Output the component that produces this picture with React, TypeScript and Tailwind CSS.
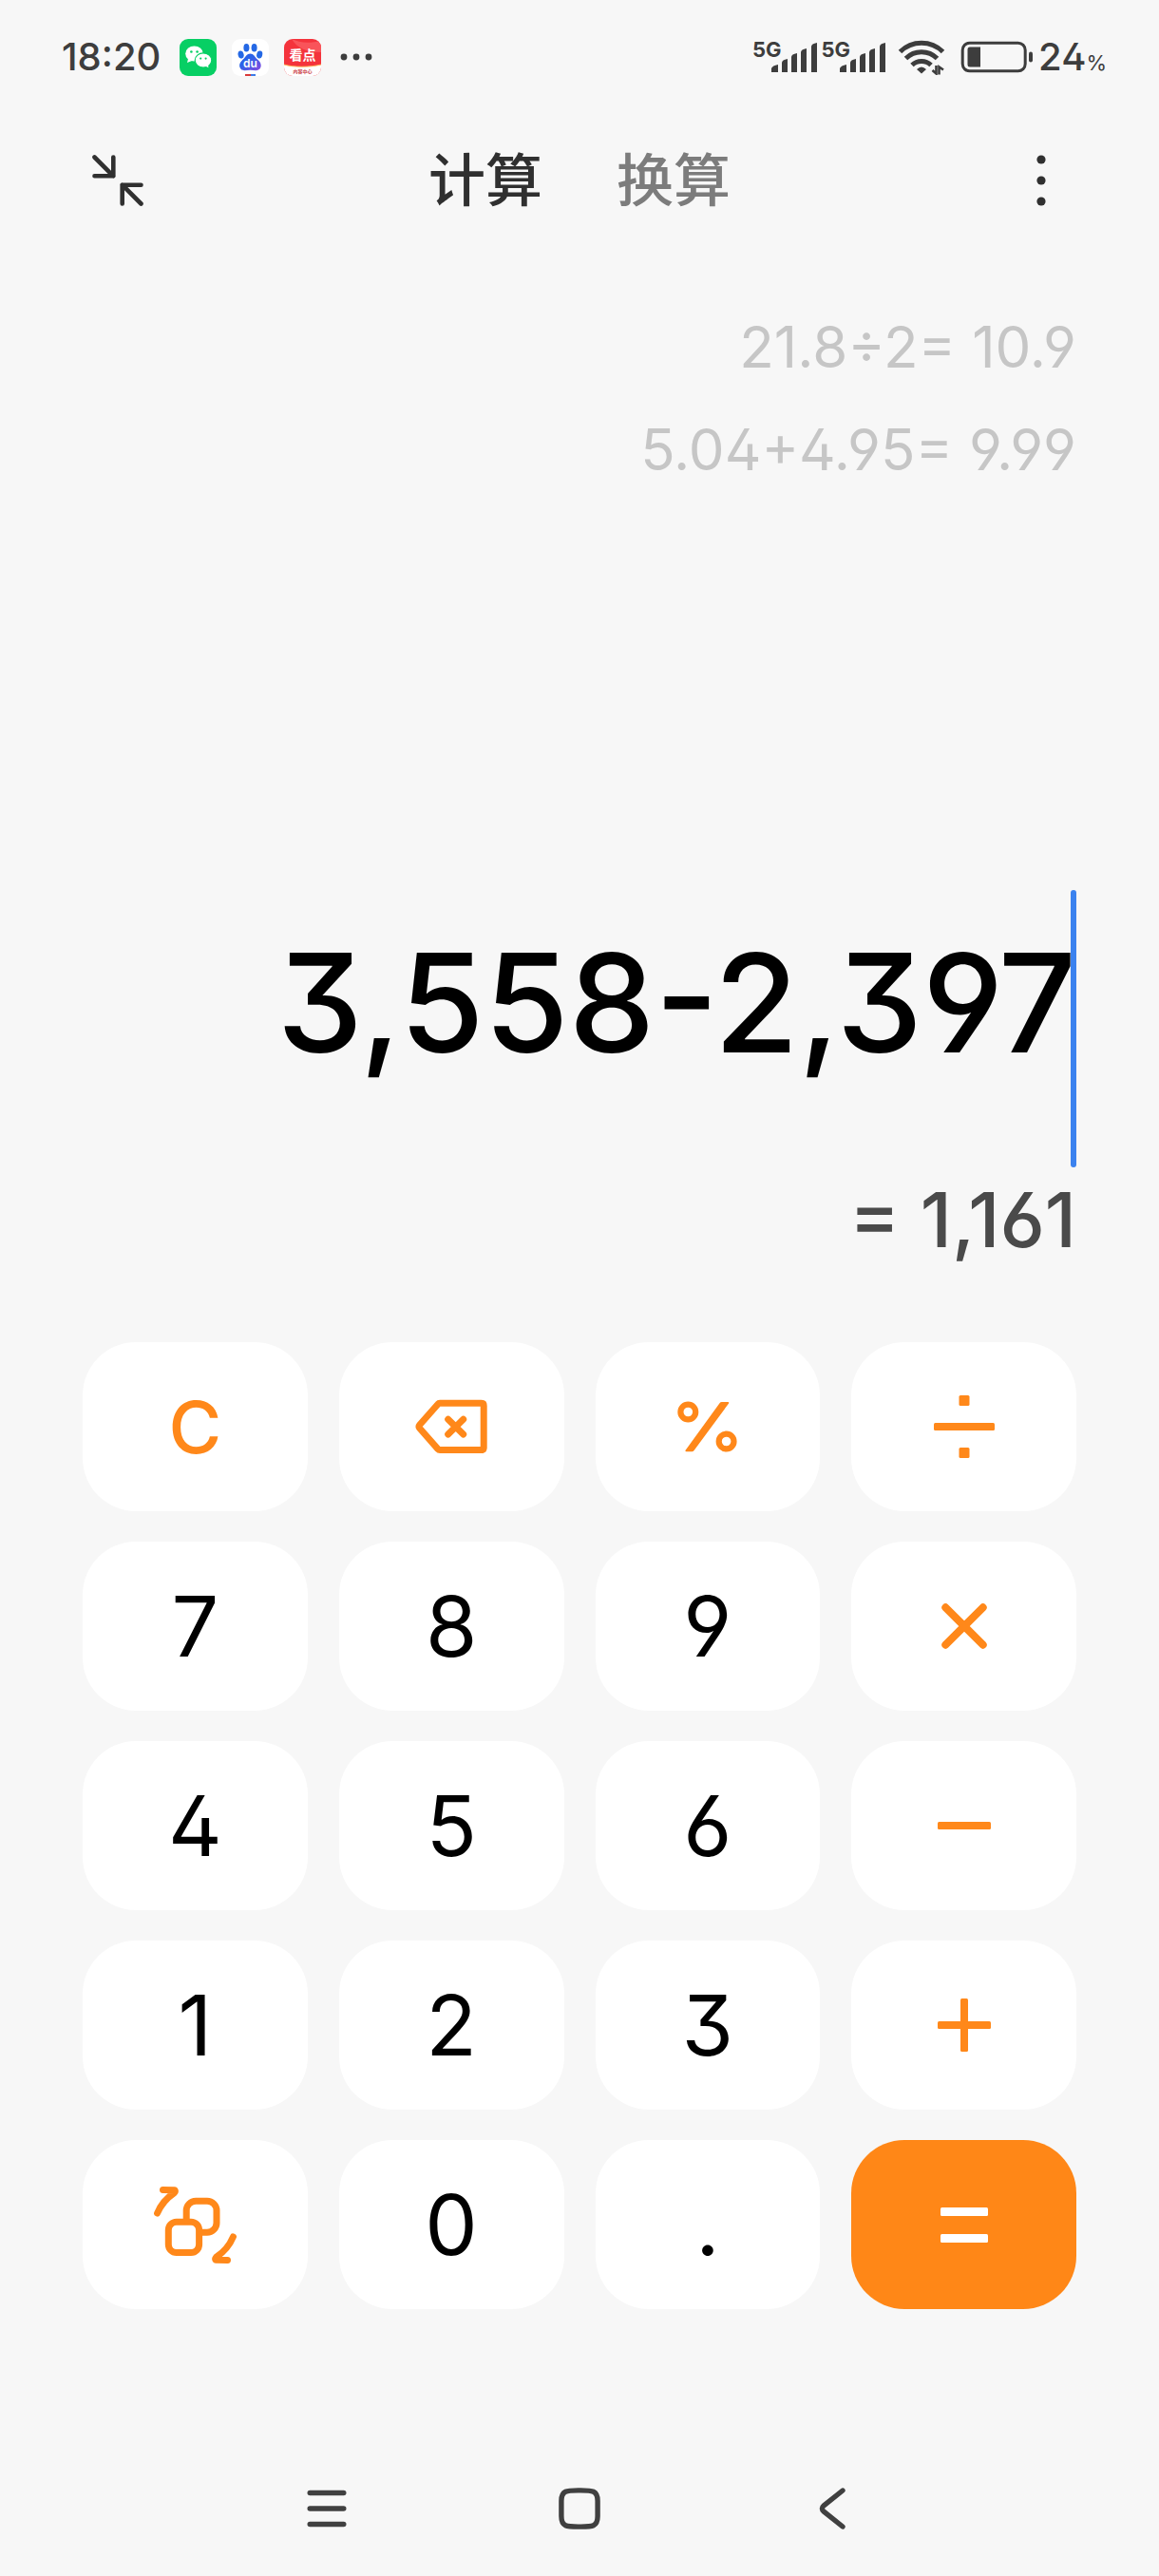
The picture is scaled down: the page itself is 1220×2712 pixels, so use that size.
import type { ReactNode } from "react";

const HISTORY = ["21.8÷2= 10.9", "5.04+4.95= 9.99"];

function WeChatIcon() {
  return (
    <svg viewBox="0 0 39 39" className="size-[39px]" aria-label="微信">
      <rect width="39" height="39" rx="9" fill="#07cf64" />
      <g fill="#fff">
        <ellipse cx="15.5" cy="15.5" rx="9.3" ry="8" />
        <path d="M9 21l-1 4 5-2z" />
        <ellipse cx="25" cy="22.5" rx="8.8" ry="7.6" stroke="#07cf64" strokeWidth="1.2" />
        <path d="M27 28.5l3.5 1.8-.6-3.3z" />
      </g>
      <g fill="#07cf64">
        <circle cx="12.4" cy="13.5" r="1.3" />
        <circle cx="18.6" cy="13.5" r="1.3" />
        <circle cx="22.2" cy="20.6" r="1.1" />
        <circle cx="27.6" cy="20.6" r="1.1" />
      </g>
    </svg>
  );
}

function BaiduIcon() {
  return (
    <svg viewBox="0 0 39 39" className="size-[39px]" aria-label="百度">
      <defs>
        <linearGradient id="paw" x1="0" y1="0" x2="1" y2="1">
          <stop offset="0.4" stopColor="#2a62e8" />
          <stop offset="1" stopColor="#8a4be0" />
        </linearGradient>
      </defs>
      <rect width="39" height="39" rx="9" fill="#fff" />
      <g fill="#2468e5">
        <ellipse cx="9.6" cy="16.5" rx="3" ry="4" transform="rotate(-14 9.6 16.5)" />
        <ellipse cx="15.4" cy="9.3" rx="3" ry="4.3" />
        <ellipse cx="23.6" cy="9.3" rx="3" ry="4.3" />
        <ellipse cx="29.2" cy="16.5" rx="3" ry="4" transform="rotate(14 29.2 16.5)" />
      </g>
      <path
        d="M19.4 15.5c3.6 0 5 3.6 7.3 5.8 2.3 2.2 4 3.7 4 6.7 0 3-2.2 5.2-5.2 5.2-2.2 0-4-.4-6.1-.4s-3.9.4-6.1.4c-3 0-5.2-2.2-5.2-5.2 0-3 1.7-4.5 4-6.7 2.3-2.2 3.7-5.8 7.3-5.8z"
        fill="url(#paw)"
      />
      <text x="19.4" y="30" textAnchor="middle" fontFamily="Inter, sans-serif" fontWeight="600" fontSize="12" fill="#fff">
        du
      </text>
      <path d="M14 37h6v2h-6z" fill="#d93a3a" />
      <path d="M20 37h5v2h-5z" fill="#3e7be8" />
    </svg>
  );
}

function KandianIcon() {
  return (
    <svg viewBox="0 0 39 39" className="size-[39px]" aria-label="看点">
      <defs>
        <clipPath id="tile">
          <rect width="39" height="39" rx="9" />
        </clipPath>
      </defs>
      <g clipPath="url(#tile)">
        <path d="M0 0h39v39H0z" fill="#f4333c" />
        <path d="M8 0c8 4 18 5 31 2v12C24 14 14 10 8 0z" fill="#f9545a" />
        <path d="M0 27c10 3 27 3 39 0v12H0z" fill="#fff" />
        <path d="M0 27c10 3 27 3 39 0" fill="none" stroke="#ffb85c" strokeWidth="1" />
      </g>
      <g textAnchor="middle" fontFamily="'Noto Sans CJK SC', sans-serif" fontWeight="700">
        <text x="19.5" y="22" fontSize="14" fill="#fff">
          看点
        </text>
        <text x="19.5" y="36" fontSize="5" fill="#c8323a">
          内容中心
        </text>
      </g>
    </svg>
  );
}

function Signal() {
  return (
    <div className="flex h-[34px] items-start">
      <span className="text-[22px] leading-[18px] font-bold">5G</span>
      <svg viewBox="0 0 50 34" className="-ml-3 h-[34px] w-[50px]" fill="currentColor" aria-hidden="true">
        <path d="M1 33v-4q1-3 7-4v8z" />
        <path d="M12 33V23q0-3 6-4v14z" />
        <path d="M22 33V17q0-3 6-4v20z" />
        <path d="M32 33V12q0-3 6-4v25z" />
        <path d="M43 33V6q0-3 6-4v31z" />
      </svg>
    </div>
  );
}

function WifiIcon() {
  return (
    <svg viewBox="0 0 50 38" className="h-[38px] w-[50px]" fill="none" stroke="currentColor" strokeWidth="5" aria-label="Wi-Fi">
      <path d="M2.5 13.5a32 32 0 0 1 45 0" />
      <path d="M8.5 20.5a23.5 23.5 0 0 1 33 0" />
      <path d="M15 27.5a14.5 14.5 0 0 1 20 0" />
      <path d="M25 36.5l-5-4.5q5-5 10 0z" fill="currentColor" stroke="none" />
      <path d="M40.5 28v8.5l-4-3.5M43.5 37.5v-8l4.5 3" strokeWidth="2.6" />
    </svg>
  );
}

function BatteryIcon() {
  return (
    <svg viewBox="0 0 78 34" className="h-[34px] w-[78px]" aria-hidden="true">
      <rect x="2.2" y="2.2" width="66" height="29.6" rx="7.5" fill="none" stroke="currentColor" strokeWidth="3" />
      <path d="M10 6.5h11v21H10q-2.5 0-2.5-2.5V9q0-2.5 2.5-2.5z" fill="currentColor" />
      <rect x="72" y="11.5" width="4" height="11" rx="2" fill="currentColor" />
    </svg>
  );
}

function StatusBar() {
  return (
    <div className="flex h-[120px] items-center justify-between pr-[55px] pl-[65px] text-[#3d3d3d]">
      <div className="flex items-center gap-4">
        <span className="mr-1 text-[40px] leading-none font-medium">18:20</span>
        <WeChatIcon />
        <BaiduIcon />
        <KandianIcon />
        <svg viewBox="0 0 34 8" className="ml-1 h-2 w-[34px]" fill="currentColor" aria-hidden="true">
          <circle cx="4" cy="4" r="3.4" />
          <circle cx="17" cy="4" r="3.4" />
          <circle cx="30" cy="4" r="3.4" />
        </svg>
      </div>
      <div className="flex items-center">
        <Signal />
        <div className="ml-1">
          <Signal />
        </div>
        <div className="ml-3">
          <WifiIcon />
        </div>
        <div className="ml-4">
          <BatteryIcon />
        </div>
        <div className="ml-1 flex items-baseline">
          <span className="text-[40px] leading-none font-medium">24</span>
          <span className="text-[22px] leading-none">%</span>
        </div>
      </div>
    </div>
  );
}

function Header() {
  return (
    <header className="flex h-[140px] items-center justify-between px-[97px] text-[#303030]">
      <button type="button" aria-label="小窗">
        <svg
          viewBox="0 0 54 54"
          className="size-[54px]"
          fill="none"
          stroke="currentColor"
          strokeWidth="4.6"
          strokeLinecap="round"
          strokeLinejoin="round"
        >
          <path d="M2.5 2.5 22.3 22.3M22.3 2.5v19.8H2.5" />
          <path d="M51.5 51.5 31.7 31.7M31.7 51.5V31.7h19.8" />
        </svg>
      </button>
      <nav className="flex gap-[78px] text-[60px] leading-[80px] font-medium">
        <a href="#calculate">计算</a>
        <a href="#convert" className="text-[#7c7c7c]">
          换算
        </a>
      </nav>
      <button type="button" aria-label="更多" className="flex w-[54px] justify-center">
        <svg viewBox="0 0 10 54" className="h-[54px] w-[10px]" fill="currentColor">
          <circle cx="5" cy="5" r="4.6" />
          <circle cx="5" cy="27" r="4.6" />
          <circle cx="5" cy="49" r="4.6" />
        </svg>
      </button>
    </header>
  );
}

function BackspaceIcon() {
  return (
    <svg viewBox="0 0 76 58" className="h-[58px] w-[76px]" fill="none" stroke="currentColor" strokeWidth="7" strokeLinejoin="round" strokeLinecap="round">
      <path d="M26 4.2h43.5q2.7 0 2.7 2.7v44q0 2.7-2.7 2.7H26q-1.2 0-2-1L4.6 30.5q-1.2-1.6 0-3.2L24 5.2q.8-1 2-1z" />
      <path d="M34.7 21.2l16 15.8M50.7 21.2l-16 15.8" />
    </svg>
  );
}

function PercentIcon() {
  return (
    <svg viewBox="0 0 63 54" className="h-[54px] w-[63px]" fill="none" stroke="currentColor" strokeWidth="6.2">
      <circle cx="11.3" cy="11.5" r="7.9" />
      <circle cx="51.6" cy="42.5" r="7.9" />
      <path d="M46.8 1h6.4q1.8 0 .7 1.7L17.6 52q-.9 1.2-2.4 1.2H9.5q-1.8 0-.7-1.7L44.5 2.2Q45.3 1 46.8 1z" fill="currentColor" stroke="none" />
    </svg>
  );
}

function DivideIcon() {
  return (
    <svg viewBox="0 0 64 66" className="h-[66px] w-16" fill="currentColor">
      <rect x="26.5" width="11" height="11" rx="1.5" />
      <rect y="29" width="64" height="8" rx="1.5" />
      <rect x="26.5" y="55" width="11" height="11" rx="1.5" />
    </svg>
  );
}

function TimesIcon() {
  return (
    <svg viewBox="0 0 48 48" className="size-12" stroke="currentColor" strokeWidth="8" strokeLinecap="round">
      <path d="M4.3 4.3l39.4 39.4M43.7 4.3L4.3 43.7" />
    </svg>
  );
}

function MinusIcon() {
  return (
    <svg viewBox="0 0 56 8" className="h-2 w-14" fill="currentColor">
      <rect width="56" height="8" rx="1.5" />
    </svg>
  );
}

function PlusIcon() {
  return (
    <svg viewBox="0 0 56 56" className="size-14" fill="currentColor">
      <rect y="24" width="56" height="8" rx="1.5" />
      <rect x="24" width="8" height="56" rx="1.5" />
    </svg>
  );
}

function EqualsIcon() {
  return (
    <svg viewBox="0 0 50 37" className="h-[37px] w-[50px]" fill="currentColor">
      <rect width="50" height="9" rx="1.5" />
      <rect y="28" width="50" height="9" rx="1.5" />
    </svg>
  );
}

function ConvertIcon() {
  return (
    <svg viewBox="0 0 87 81" className="h-[81px] w-[87px]" fill="none" stroke="currentColor" strokeWidth="7" strokeLinecap="round" strokeLinejoin="round">
      <rect x="15.3" y="37.2" width="32.3" height="32.4" rx="8.5" />
      <path d="M34.2 36V25.2a10 10 0 0 1 10-10H56a10 10 0 0 1 10 10v13a10 10 0 0 1-10 10h-6" strokeLinecap="butt" />
      <path d="M9.5 3.5L22 3.8q.8 1.4-.4 2.7Q9 15 3.6 28" />
      <path d="M77.5 77.5L65 77.2q-.8-1.4.4-2.7Q78 66 83.4 53" />
    </svg>
  );
}

type Key = { label: string; face?: ReactNode; tone?: "accent" | "solid" };

const KEYS: Key[] = [
  { label: "C", tone: "accent", face: <span className="text-[76px] leading-none font-medium">C</span> },
  { label: "退格", tone: "accent", face: <BackspaceIcon /> },
  { label: "百分比", tone: "accent", face: <PercentIcon /> },
  { label: "除", tone: "accent", face: <DivideIcon /> },
  { label: "7" },
  { label: "8" },
  { label: "9" },
  { label: "乘", tone: "accent", face: <TimesIcon /> },
  { label: "4" },
  { label: "5" },
  { label: "6" },
  { label: "减", tone: "accent", face: <MinusIcon /> },
  { label: "1" },
  { label: "2" },
  { label: "3" },
  { label: "加", tone: "accent", face: <PlusIcon /> },
  { label: "科学计算", tone: "accent", face: <ConvertIcon /> },
  { label: "0" },
  { label: "." },
  { label: "等于", tone: "solid", face: <EqualsIcon /> },
];

const TONES = {
  digit: "bg-white text-black",
  accent: "bg-white text-[#ff881a]",
  solid: "bg-[#ff8717] text-white",
};

function Keypad() {
  return (
    <div className="grid grid-cols-4 gap-x-[33px] gap-y-8 px-[87px]">
      {KEYS.map((key) => (
        <button
          key={key.label}
          type="button"
          aria-label={key.label}
          className={`flex h-[178px] items-center justify-center rounded-[56px] text-[88px] leading-none ${TONES[key.tone ?? "digit"]}`}
        >
          {key.face ?? key.label}
        </button>
      ))}
    </div>
  );
}

function SystemNav() {
  return (
    <nav className="flex h-[142px] items-center justify-center gap-[222px] text-[#404040]">
      <button type="button" aria-label="最近任务">
        <svg viewBox="0 0 44 44" className="size-11" stroke="currentColor" strokeWidth="5.6" strokeLinecap="round">
          <path d="M4.3 5.5h35.4M4.3 22h35.4M4.3 38.5h35.4" />
        </svg>
      </button>
      <button type="button" aria-label="主屏幕">
        <svg viewBox="0 0 44 44" className="size-11" fill="none" stroke="currentColor" strokeWidth="5.4">
          <path d="M22 2.9c13 0 19.1-.4 19.1 11.1v16c0 11.5-6.1 11.1-19.1 11.1S2.9 41.5 2.9 30V14C2.9 2.5 9 2.9 22 2.9z" />
        </svg>
      </button>
      <button type="button" aria-label="返回">
        <svg viewBox="0 0 44 44" className="size-11" fill="none" stroke="currentColor" strokeWidth="5.4" strokeLinecap="round">
          <path d="M33 3L13.2 18.8q-3.6 3.2 0 6.4L33 41" />
        </svg>
      </button>
    </nav>
  );
}

export default function App() {
  return (
    <div className="flex min-h-screen flex-col bg-[#f7f7f7] font-[Inter,'Noto_Sans_CJK_SC',sans-serif] [font-feature-settings:'ss01','cv03','cv04','cv09']">
      <StatusBar />
      <Header />

      <main className="flex flex-1 flex-col">
        <ul className="flex-1 px-[87px] pt-[51px] text-right text-[60px] leading-[108px] text-[#c6c6c6]">
          {HISTORY.map((line) => (
            <li key={line}>{line}</li>
          ))}
        </ul>

        <div className="relative mx-[87px] pb-14">
          <input
            type="text"
            aria-label="算式"
            readOnly
            value="3,558-2,397"
            className="block h-[236px] w-full text-right text-[144px] font-medium text-black outline-none"
          />
          <span className="absolute inset-y-0 right-0 w-[6px] rounded-full bg-[#3b82ef]" />
        </div>
        <p className="mx-[87px] mb-[74px] text-right text-[80px] leading-[110px] font-medium text-[#4a4a4a]">
          = 1,161
        </p>

        <Keypad />
      </main>

      <div className="pt-[139px]">
        <SystemNav />
      </div>
    </div>
  );
}
